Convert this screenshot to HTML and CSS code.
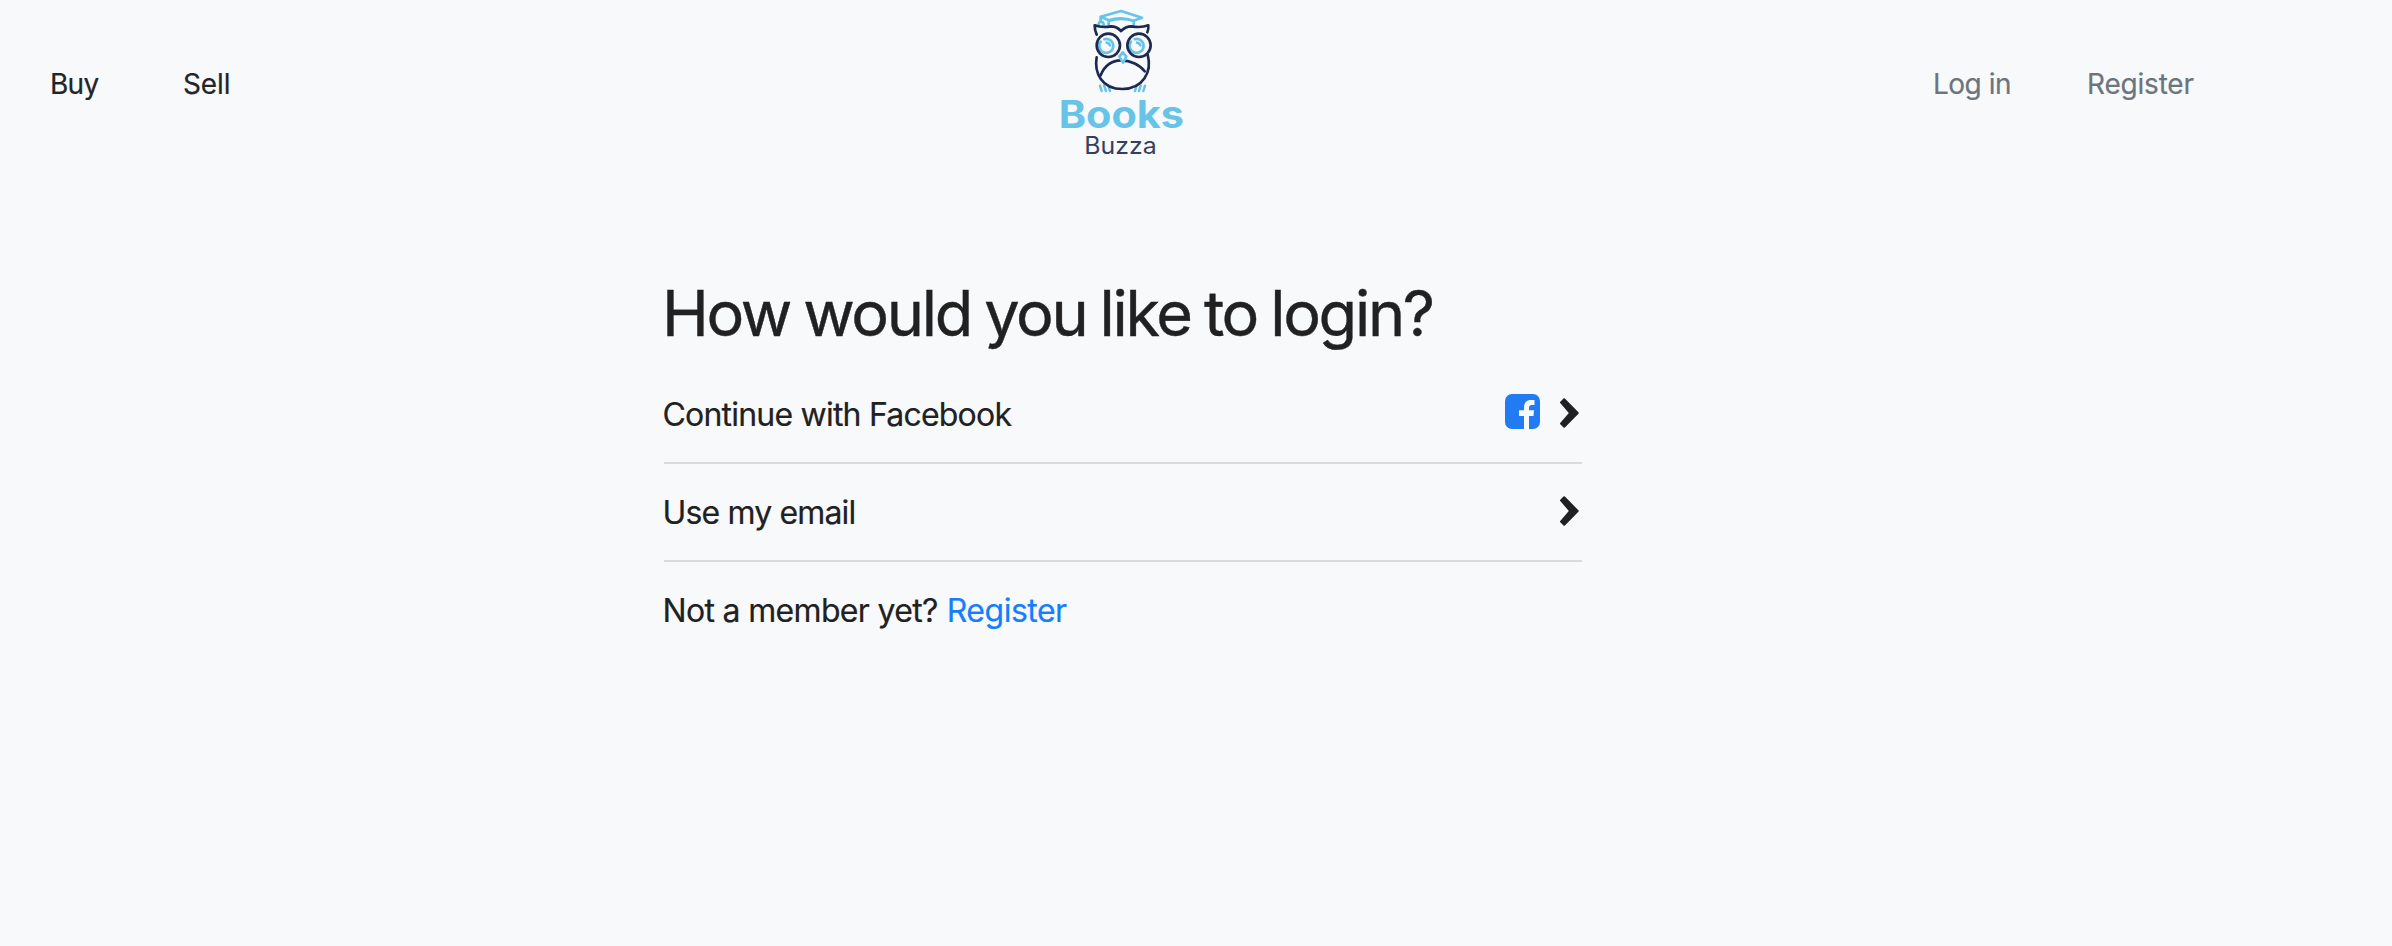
FILE: index.html
```
<!DOCTYPE html>
<html lang="en">
<head>
<meta charset="utf-8">
<title>Books Buzza</title>
<link rel="stylesheet" href="styles.css">
</head>
<body>
<header class="navbar">
  <nav class="nav nav-main">
    <a class="buy" href="#">Buy</a>
    <a class="sell" href="#">Sell</a>
  </nav>
  <a class="brand" href="#">
    <svg class="logo" viewBox="0 0 480 510" fill="none" stroke-linecap="round" stroke-linejoin="round" role="img" aria-label="Books Buzza">
      <g stroke="#68c3e8" stroke-width="8">
        <path d="M206 76V63Q243 50 281 63V76M182 50L243 33L306 53L281 62Q243 48 206 61L182 50V66M176 76Q176 65 183 65T192 77"/>
        <path stroke-width="7.500" d="M180 257L185 273M192 256L198 273M205 256L210 273M290 256L285 273M302 257L297 273M315 257L310 273"/>
        <path d="M182 125A21 21 0 1 0 193 117.500M273 125A21 21 0 1 0 284 117.500"/>
        <path d="M200 128Q207 129 210 136M291 128Q298 129 301 136"/>
      </g>
      <g stroke="#1c2a50" stroke-width="8">
        <path d="M170 104Q164 91 164 76Q186 84 213 79Q230 79 243 93Q257 79 274 79Q304 84 325 76Q326 88 322 97"/>
        <circle cx="205" cy="136" r="35"/>
        <circle cx="297" cy="136" r="35"/>
        <path d="M170 172C162 218 185 267 247 267C309 267 337 216 323 164M182 226C193 196 217 181 242 181C273 181 300 195 314 214"/>
      </g>
      <path d="M248 157L259 170L249 188L238 170Z" fill="#f8f9fb" stroke="#68c3e8" stroke-width="8"/>
      <text class="logo-books" x="56" y="384" textLength="376" lengthAdjust="spacingAndGlyphs">Books</text>
      <text class="logo-buzza" x="133" y="462" textLength="217" lengthAdjust="spacingAndGlyphs">Buzza</text>
    </svg>
  </a>
  <nav class="nav nav-user">
    <a class="log-in" href="#">Log in</a>
    <a class="sign-up" href="#">Register</a>
  </nav>
</header>
<main class="login">
  <h1 class="title">How would you like to login?</h1>
  <a class="option" href="#">
    <span class="opt-facebook">Continue with Facebook</span>
    <span class="icons">
      <svg class="facebook" viewBox="0 0 35 35"><rect width="35" height="35" rx="7" fill="#217bf2"/><path fill="#f8f9fb" d="M19 35V22H14V16.300H19V13.500C19 8.500 21.500 6 26 6H29.500V11H27C24.700 11 24 12.100 24 14V16.300H29L28.500 22H24V35Z"/></svg>
      <svg class="chevron" viewBox="0 0 19 30"><path d="M1 4.400L4.200 1.200L17.700 15L4.200 28.800L1 25.600L10.200 15Z" fill="#212121" stroke="#212121" stroke-width="2" stroke-linejoin="round"/></svg>
    </span>
  </a>
  <a class="option" href="#">
    <span class="opt-email">Use my email</span>
    <span class="icons">
      <svg class="chevron" viewBox="0 0 19 30"><path d="M1 4.400L4.200 1.200L17.700 15L4.200 28.800L1 25.600L10.200 15Z" fill="#212121" stroke="#212121" stroke-width="2" stroke-linejoin="round"/></svg>
    </span>
  </a>
  <p class="member"><span class="question">Not a member yet?</span> <a class="join" href="#">Register</a></p>
</main>
</body>
</html>
```
FILE: styles.css
```
* { box-sizing: border-box; }
body {
  margin: 0;
  min-height: 946px;
  background: #f8f9fb;
  color: #212121;
  font-family: Inter, "Liberation Sans", sans-serif;
  font-size: 32px;
  -webkit-text-stroke: 0.2px currentColor;
}
a { color: inherit; text-decoration: none; }
.navbar {
  display: grid;
  grid-template-columns: 1040px 160px 1fr;
  height: 170px;
}
.nav {
  display: flex;
  padding-top: 62px;
  font-size: 28px;
  line-height: 44px;
  letter-spacing: -0.5px;
  white-space: nowrap;
}
.nav-main { padding-left: 50px; color: #212529; }
.nav-user { padding-left: 733px; color: #6c757d; }
.buy { width: 133px; letter-spacing: -0.7px; }
.sell { letter-spacing: -0.1px; }
.log-in { width: 154px; }
.sign-up { letter-spacing: -0.2px; }
.logo { display: block; width: 160px; height: 170px; }
.logo-books { font: 700 113px Inter, sans-serif; fill: #68c3e8; }
.logo-buzza { font: 400 71px Inter, sans-serif; fill: #35405f; -webkit-text-stroke: 0; }
.login { width: 918px; margin: 104px 0 0 664px; }
.title {
  margin: 0 0 0 -2px;
  height: 92px;
  font-size: 63px;
  line-height: 78px;
  font-weight: 400;
  letter-spacing: -2.3px;
  word-spacing: -2.3px;
  white-space: nowrap;
  -webkit-text-stroke-width: 0.4px;
}
.option {
  display: flex;
  align-items: center;
  justify-content: space-between;
  height: 98px;
  border-bottom: 2px solid #d8dadc;
}
.opt-facebook, .opt-email, .question { margin-left: -1.5px; }
.opt-facebook { letter-spacing: -0.79px; }
.opt-email { letter-spacing: -0.85px; }
.question { letter-spacing: -0.67px; }
.icons { display: flex; align-items: center; gap: 20px; padding: 0 3px 2px 0; }
.facebook { width: 35px; height: 35px; margin-bottom: 4px; }
.chevron { width: 19px; height: 30px; }
.member { margin: 0; line-height: 98px; }
.join { color: #167efb; letter-spacing: -0.5px; }
```
